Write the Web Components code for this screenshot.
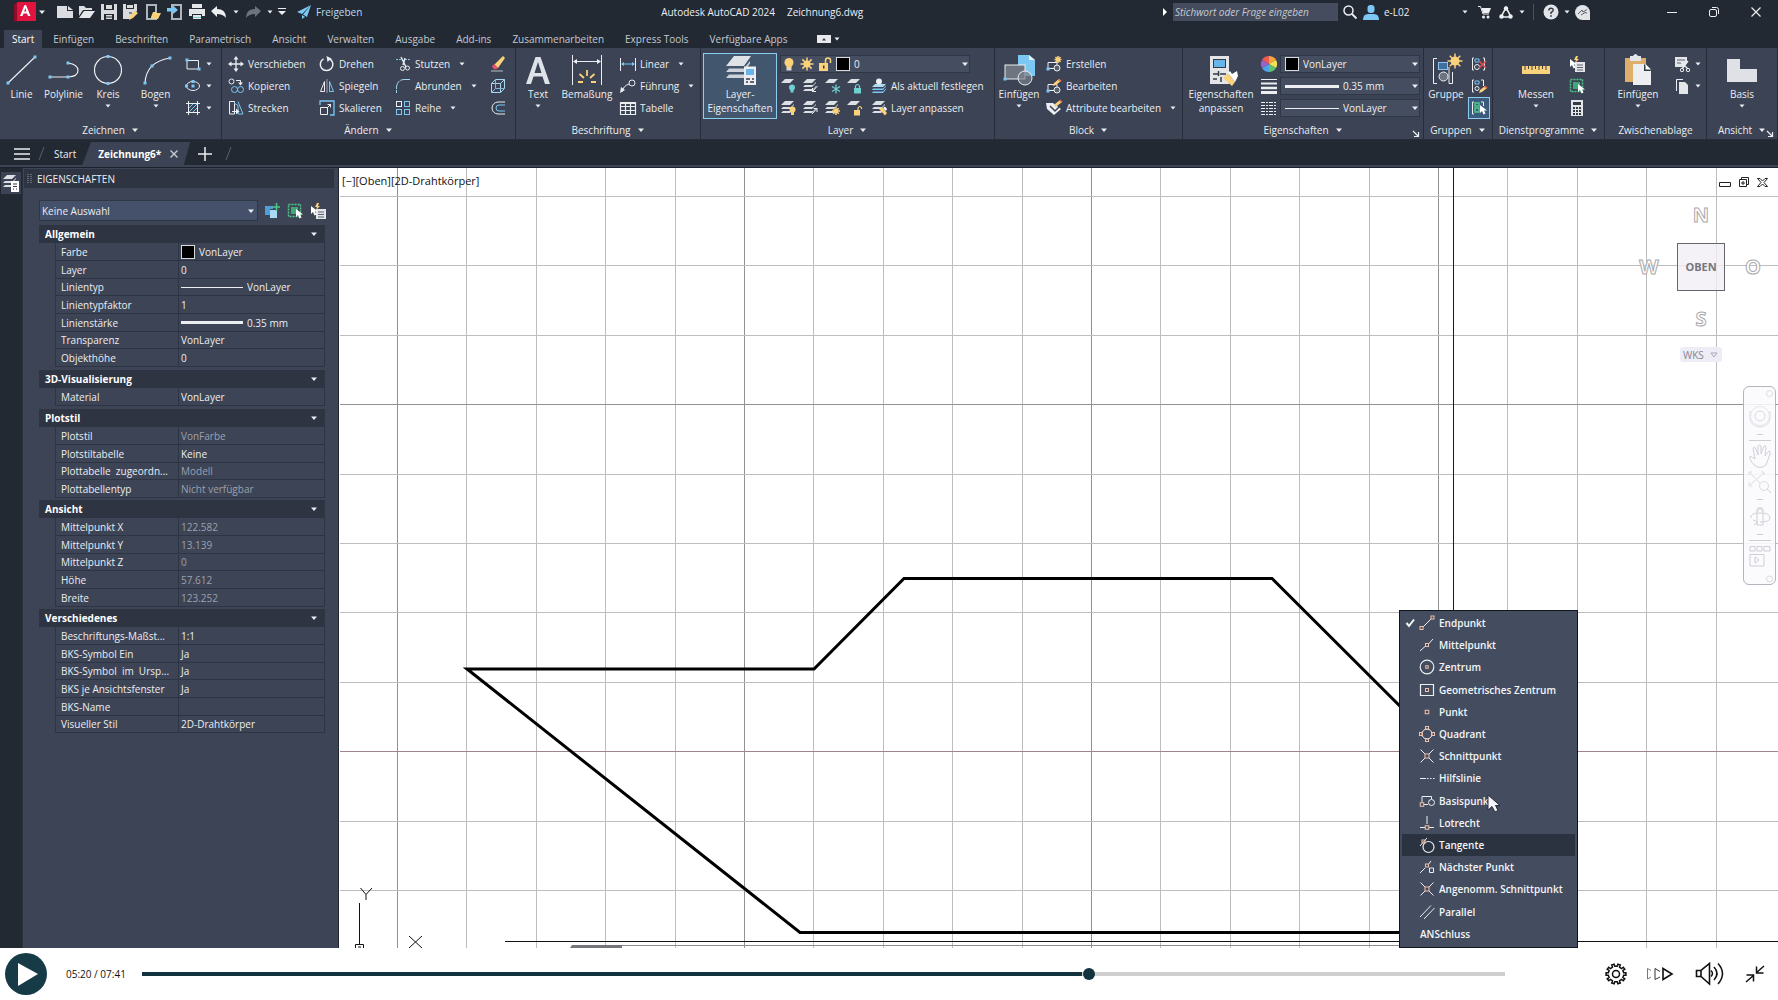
<!DOCTYPE html>
<html lang="de">
<head>
<meta charset="utf-8">
<title>Autodesk AutoCAD 2024 – Zeichnung6.dwg</title>
<style>
html,body{height:100%;margin:0}
body{background:#fff;font:10px/14px "Open Sans","Noto Sans","Liberation Sans",sans-serif;color:#eceef2;overflow:hidden}
cad-app{height:100%}
</style>
</head>
<body>
<cad-app></cad-app>
<script>
/* ---------- icons: name -> [width, height, svg content] ---------- */
const W='#eceef2', B='#7cc8f4', Y='#fbd27c', T='#6fd0d0';
const dot=(x,y)=>`<rect x="${x-1.5}" y="${y-1.5}" width="3" height="3" fill="${B}"/>`;
const sq=(x,y,s=3)=>`<rect x="${x-s/2}" y="${y-s/2}" width="${s}" height="${s}" fill="none" stroke="#f0c0a8"/>`;
const sheet=(y,f='#dcdfe4')=>`<path d="M1 ${y+4}L5 ${y}H14L10 ${y+4}Z" fill="${f}"/>`;
const sheets=sheet(1)+`<path d="M1 9L3 7H11L14 4V5L10 9ZM1 13L3 11H11L14 8V9L10 13Z" fill="#dcdfe4"/>`;
const st=(d,c=W,w=1)=>`<path d="${d}" fill="none" stroke="${c}" stroke-width="${w}"/>`;
const fl=(d,c=W)=>`<path d="${d}" fill="${c}"/>`;
const sun=(x,y,r,R,c=Y)=>{let s='';for(let i=0;i<8;i++){const a=i*Math.PI/4;s+=`M${x} ${y}L${(x+R*Math.cos(a)).toFixed(1)} ${(y+R*Math.sin(a)).toFixed(1)}`}return st(s,c,1.5)+`<circle cx="${x}" cy="${y}" r="${r}" fill="${c}"/>`};
const cursor=(x,y)=>`<path d="M${x} ${y}v8l2-2 1.500 3.500 2-1-1.500-3h3z" fill="#fff"/>`;
const pencil=(x,y)=>`<path d="M${x} ${y+6}l1-3 5-4 2 2-5 4z" fill="${Y}"/><path d="M${x+5} ${y}l1-1.500 2.500 2-1 1.500z" fill="#e8694c"/>`;
const ICONS={
 logo:[22,20,fl('M0 3L4 0H22V19H0Z','#e2143f')+fl('M0 3L3 1V20L0 19Z','#8d0d2b')+fl('M12 3L16.500 14H14L13 11.500H9.500L8.500 14H6L10.500 3ZM11.300 6L10.200 9.500H12.400Z','#fff')],
 down:[8,8,fl('M1 2.500H7L4 6Z')],
 downs:[6,6,fl('M.5 1.500H5.500L3 4.500Z')],
 right:[6,10,fl('M1 1L5 5L1 9Z','#fff')],
 new:[16,14,fl('M0 1H10V6H16V13H0Z','#dcdde0')+fl('M11 1L16 5H11Z','#dcdde0')],
 open:[16,14,fl('M0 1H5L7 3H13V5H4L0 11Z','#dcdde0')+fl('M5 6H16L11 13H0Z','#e6e7ea')],
 save:[16,16,fl('M0 0H16V16H0ZM3 0V6H13V0ZM3 10V16H13V10Z','#d9dade').replace('/>',' fill-rule="evenodd"/>')+fl('M5 1H11V5H5ZM5 11H11V12.500H5ZM5 13.500H11V15H5Z','#d9dade')],
 saveas:[16,16,fl('M0 0H14V7L7 15H0ZM3 0V5H11V0Z','#d9dade').replace('/>',' fill-rule="evenodd"/>')+fl('M4 1H10V4H4Z','#d9dade')+fl('M7 12l5-5 3 2-5 5-4 2z',Y)+st('M6 9H9','#222933')],
 openweb:[16,16,st('M2 1H11V15H2Z','#aeb4bc',2)+fl('M6 13L8 8H11L12 9H16L13 15H6Z',Y)],
 saveweb:[16,16,st('M5 1H14V15H5Z','#aeb4bc',2)+fl('M0 4H6V1.500L11 6L6 10V7.500H0Z',B)],
 print:[16,16,fl('M3 0H13V4H3ZM0 5H16V12H13V10H3V12H0Z','#e4e5e8')+fl('M4 11H12V15H4Z','#e4e5e8')+st('M4 13.500H12',T)],
 undo:[16,14,fl('M0 6L6 1V4Q15 4 15 13Q12 9 6 9V12Z','#eceef2')],
 redo:[16,14,fl('M16 6L10 1V4Q1 4 1 13Q4 9 10 9V12Z','#6d747e')],
 qat:[8,10,st('M0 1.500H8',W)+fl('M0 4H8L4 8Z')],
 plane:[14,14,fl('M0 7L14 0L5 9ZM14 0L10 12L6 9.500ZM5 10L8 12L5 14Z',B)],
 search:[14,14,`<circle cx="5.500" cy="5.500" r="4.500" fill="none" stroke="${W}" stroke-width="1.500"/>`+st('M9 9L13.500 13.500',W,1.800)],
 user:[16,15,`<rect x="4.500" y="0" width="7" height="8" rx="3" fill="${B}"/>`+fl('M0 15Q0 9 5 9H11Q16 9 16 15Z',B)],
 cart:[13,14,st('M0 1.500H2.500L5 9H11',W)+fl('M3.500 3H13L11 8H5Z')+'<circle cx="5.500" cy="12" r="1.500" fill="#eceef2"/><circle cx="10" cy="12" r="1.500" fill="#eceef2"/>'],
 adsk:[14,13,st('M7 1.500L2 11H12Z',W,1.600)+'<circle cx="7" cy="2.500" r="2.200" fill="#eceef2"/><circle cx="2.500" cy="10.500" r="2.200" fill="#eceef2"/><circle cx="11.500" cy="10.500" r="2.200" fill="#eceef2"/>'],
 help:[16,16,'<circle cx="8" cy="8" r="7.500" fill="#e3e4e8"/>'+st('M5.800 6.500Q5.800 4.300 8 4.300T10.200 6.300Q10.200 7.500 8 8.500V10','#333b47',1.400)+'<rect x="7.200" y="11.200" width="1.600" height="1.600" fill="#333b47"/>'],
 assist:[15,15,fl('M7.500 0A7.500 7.500 0 0 1 15 7.500V15H7.500A7.500 7.500 0 0 1 7.500 0Z','#e3e4e8')+st('M3 9L7 5L8 7L12 4.500M6 10L10 7.500L12 8','#59616d')],
 min:[10,10,st('M0 5.500H10',W)],
 restore:[10,10,`<rect x=".5" y="2.500" width="7" height="7" rx="1.500" fill="none" stroke="${W}"/>`+st('M3 .5H7.500Q9.500 .5 9.500 2.500V7',W)],
 close:[10,10,st('M.5 .5L9.500 9.500M9.500 .5L.5 9.500',W,1.200)],
 ribmin:[14,8,'<rect width="14" height="8" fill="#e8e9ec"/>'+fl('M5 5.500H9L7 3Z','#333b47')],
 line:[32,32,st('M2 29L29 3',W,1.200)+dot(2,29)+dot(29,3)],
 pline:[32,32,st('M2 23H20Q30 22.500 30 16.500T20 9',W,1.200)+dot(2,23)+dot(20,23)+dot(20,9)],
 circle:[32,32,`<circle cx="16" cy="16" r="13.500" fill="none" stroke="${W}" stroke-width="1.200"/>`+dot(16,2.500)+dot(16,29.500)],
 arc:[32,32,st('M5 29Q6 8 30 4',W,1.200)+dot(5,29)+dot(12,12)+dot(30,4)],
 rect:[16,16,st('M2 4.500H13.500V13H2Z')+dot(2,4)+dot(14,13)],
 ellipse:[16,16,`<ellipse cx="8" cy="8" rx="6.500" ry="4.500" fill="none" stroke="${W}"/>`+dot(8,8)+dot(8,3.500)+dot(1.500,8)],
 hatch:[16,16,st('M3.500 1V15M12.500 1V15M1 3.500H15M1 12.500H15')+st('M4 8L8 4M4 12L12 4M8 12L12 8',B)],
 move:[16,16,st('M8 2V14M2 8H14',W,1.300)+fl('M8 0L10.500 3.500H5.500ZM8 16L10.500 12.500H5.500ZM0 8L3.500 5.500V10.500ZM16 8L12.500 5.500V10.500Z')],
 copy:[16,16,`<circle cx="3.500" cy="3.500" r="2.500" fill="none" stroke="${W}"/>`+st('M8 2.500H12.500V5')+fl('M10 4.500H15L12.500 7.500Z')+`<circle cx="6.500" cy="11.500" r="3" fill="none" stroke="${B}"/><circle cx="12.500" cy="11.500" r="3" fill="none" stroke="${B}"/>`],
 stretch:[16,16,st('M1.500 1.500H6.500V14H1.500ZM4 11.500H10')+st('M6 3L10 5.500V14H15L10 1.500',B)+fl('M8 8.500L11.500 11.500L8 14.500Z')],
 rotate:[16,16,st('M11 3A6.300 6.300 0 1 1 4.500 2.800',W,1.500)+fl('M7.500 0L12.500 2.500L8.500 6Z')],
 mirror:[16,16,st('M5.500 3.500V13.500H1.500Z')+st('M8 1V15','#9aa3ae')+st('M10.500 3.500V13.500H14.500Z',B)],
 scale:[16,16,st('M1 5V1H15V15H11',B,1.300)+st('M1.500 7.500H8.500V14.500H1.500Z')+st('M8 8L11.500 4.500M8.500 4.500H11.500V7.500')],
 trim:[16,16,st('M1 3.500H6M10 3.500H16',B).replace('/>',' stroke-dasharray="2 1"/>')+st('M6 1L11 11M10 2L8 9',W,1.400)+`<circle cx="7.500" cy="12.500" r="2" fill="none" stroke="${W}"/><circle cx="12.500" cy="12" r="2" fill="none" stroke="${W}"/>`],
 fillet:[16,16,st('M1.500 15V9Q2 2 9 1.500H15','#9fd5f2').replace('/>',' stroke-dasharray="3 1 9 1 20"/>')],
 array:[16,16,`<g fill="none"><rect x="1.500" y="1.500" width="5" height="5" stroke="${W}"/><rect x="9.500" y="1.500" width="5" height="5" stroke="${B}"/><rect x="1.500" y="9.500" width="5" height="5" stroke="${B}"/><rect x="9.500" y="9.500" width="5" height="5" stroke="${B}"/></g>`],
 erase:[16,16,fl('M4 9L13 0L15 2L8 12Z',Y)+fl('M2 10L4.500 8L8 12L6 13.500Q3 13.500 2 10Z','#e8536d')+st('M1 15H13','#b9bfc8')],
 box3d:[16,16,st('M1.500 5.500L5.500 1.500H14.500V10.500L10.500 14.500H1.500Z M1.500 5.500H10.500V14.500M10.500 5.500L14.500 1.500','#a8d8f0')+st('M5.500 2V10.500H14M5.500 10.500L2 14','#7fb4d6')],
 offset:[16,16,st('M15 2H8A6 6 0 0 0 8 14H15')+st('M15 5H9A3 3 0 0 0 9 11H15',B)],
 text:[32,32,fl('M13.500 3H18.500L28 30H23L20.500 22.500H11.500L9 30H4ZM16 8L12.500 19H19.500Z','#dfe2e8')],
 dim:[32,32,st('M1.500 1V31M30.500 1V31',W)+st('M3 7.500H29')+fl('M2 7.500L6 5V10ZM30 7.500L26 5V10Z')+st('M7 28H12M20 28H25M8.500 20L13 24M23.500 20L19 24M16 16V22',Y,1.800)],
 linear:[16,16,st('M.5 2V15M15.500 2V15')+st('M2 8H14',B)+fl('M1 8L4 6V10ZM15 8L12 6V10Z',B)],
 leader:[16,16,st('M2 14Q3 8 9 6')+fl('M0 15L1 9L5 12Z')+`<circle cx="12" cy="5" r="3" fill="none" stroke="${W}"/>`],
 table:[16,16,st('M.5 2.500H15.500V14.500H.5ZM1 3.500H15M.5 6.500H15.500M.5 10.500H15.500M5.500 4V14.500M10.500 4V14.500',W,1.200)],
 layers:[32,32,fl('M2 12L10 2H27L20 12Z','#dfe2e6')+fl('M2 18L5 14.500H20L26 7V9.500L20 18ZM2 24L5 20.500H20V24Z','#cfd3d9')+fl('M20 12.500H32V31H20Z','#eceef2')+fl('M22 15H30V21H22Z','#68b5ec')+st('M22 25H26M28 25H30M22 28H24M26 28H30','#333b47',1.300)],
 bulb:[14,14,`<circle cx="7" cy="5.500" r="4.500" fill="${Y}"/>`+fl('M4.500 10.500H9.500V13.500H4.500Z','#d6d8dc')+fl('M4.500 8H9.500V11H4.500Z',Y)],
 sun:[14,14,sun(7,7,3.500,6.500)],
 unlock:[14,14,fl('M1 6H10V14H1Z',Y)+st('M7.500 6V3.500Q7.500 1 10 1T12.500 3.500V6',Y,1.500)+fl('M5 8.500H6.500V11.500H5Z','#333b47')],
 lay1:[16,16,sheet(1)+`<circle cx="12" cy="9.500" r="3" fill="${T}"/>`+fl('M10.500 12H13.500V14.500H10.500Z',T)],
 lay2:[16,16,sheets+st('M15.500 8L10.500 13.500M10.500 10V13.500H14')],
 lay3:[16,16,sheet(1)+st('M12 6.500V15.500M8 8.500L16 13.500M16 8.500L8 13.500',T,1.300)],
 lay4:[16,16,sheet(1)+fl('M8 10H15V15.500H8Z',T)+st('M9.500 10V8Q11.500 5 13.500 8V10',T,1.200)],
 lay5:[16,16,fl('M1 9L4 6H15L12 9Z','#b4d9f2')+fl('M1 12L2 10.500H12L15 7.500V8.500L12 12ZM1 15L2 13.500H12L15 10.500V11.500L12 15Z',B)+'<circle cx="8" cy="3.500" r="3" fill="#eceef2"/>'],
 lay6:[16,16,sheets+`<circle cx="12.500" cy="9.500" r="3" fill="${Y}"/>`+fl('M11 12H14V15H11Z',Y)],
 lay7:[16,16,sheets+st('M10 14L15 8.500M11.500 8.500H15V12')],
 lay8:[16,16,sheets+sun(12,11,2.200,4)],
 lay9:[16,16,sheet(1)+fl('M8 10H14V15.500H8Z',Y)+st('M12 10V8Q14 5 15.500 8V9',Y,1.200)],
 lay10:[16,16,sheets+fl('M8 9L11 7L16 13L14 15.500Z',Y)+fl('M12 8L14 6.500L16 9L15 11Z','#fff')],
 insblk:[32,32,fl('M15 1H26L32 6V22H15Z',B)+fl('M26 1V6H32Z','#e4f2fb')+'<rect x="2" y="11" width="20" height="14" fill="#6f7580" stroke="#eceef2"/>'+dot(2,25)+'<circle cx="22" cy="24" r="7" fill="#7a808b" fill-opacity=".7" stroke="#eceef2"/>'],
 mkblk:[16,16,st('M2 6.500H11V12.500H2Z')+dot(2,13)+'<circle cx="11" cy="12" r="3" fill="#59616f" stroke="#eceef2"/>'+sun(12,3.500,1.500,3.500)],
 edblk:[16,16,st('M2 6.500H11V12.500H2Z')+dot(2,13)+'<circle cx="11" cy="12" r="3" fill="#59616f" stroke="#eceef2"/>'+pencil(7,2)],
 attr:[16,16,fl('M0 3H7L15 9L8 15L1 9Z')+st('M4 6L9 11L13 7','#3b4354',1.500)+pencil(8,1)],
 match:[32,32,fl('M5 2H24V30H5Z','#e4e5e9')+fl('M8 5H21V14H8Z','#333b47')+fl('M9 6H20V13H9Z','#68b5ec')+st('M8 20H13M15 20H21M8 25H12M13.500 17V22M16 23V28','#333b47',1.500)+fl('M18 24L23 19L30 28L27 32Z',Y)+fl('M23 19L25 17L27 20L32 17L33 22L30 28Z','#fff')],
 wheel:[16,16,fl('M8 8L8 0A8 8 0 0 1 15 4Z','#f6a63a')+fl('M8 8L15 4A8 8 0 0 1 15 12Z','#f5e05a')+fl('M8 8L15 12A8 8 0 0 1 8 16Z','#5cc46c')+fl('M8 8L8 16A8 8 0 0 1 1 12Z','#4aa3e6')+fl('M8 8L1 12A8 8 0 0 1 1 4Z','#9a5fd0')+fl('M8 8L1 4A8 8 0 0 1 8 0Z','#ee5a52')],
 lws:[16,16,st('M0 1.500H16')+st('M0 5.500H16',W,2)+st('M0 10H16',W,2.500)+st('M0 14.500H16',W,3)],
 lts:[16,16,st('M0 2.500H16M0 5.500H16M0 8.500H16M0 11.500H16M0 14.500H16').replace('/>',' stroke-dasharray="4 1 2 1"/>')],
 group:[32,32,st('M7 4.500H3.500V29.500H7M19 13V29.500H22.500V18')+'<rect x="8.500" y="8.500" width="9" height="7" fill="#3f6f9e" stroke="#8fc4ec"/><circle cx="13.500" cy="22.500" r="4.500" fill="#6f7580" stroke="#eceef2"/>'+sun(25,7,4.500,7.500)],
 ungroup:[16,16,st('M3 2H1.500V14H3M12 2H13.500V14H12')+st('M4 3H8V6H4Z',B)+'<circle cx="6" cy="11" r="2.500" fill="none" stroke="#eceef2"/>'+st('M8 5L15 12M15 5L8 12','#e2484d',1.700)],
 grpedit:[16,16,st('M3 2H1.500V14H3M10 2H12.500V8')+st('M4 3H8V6H4Z',B)+'<circle cx="6" cy="10.500" r="2" fill="none" stroke="#eceef2"/>'+pencil(8,9)],
 grpsel:[16,16,st('M3 2H1.500V14H3M10 2H12.500V6')+st('M4 3H8V6H4ZM4 8H8V12H4Z','#4fc78b',1.500)+cursor(9,5)],
 measure:[32,32,fl('M2 12H30V20H2Z',Y)+st('M5 12V16M8.500 12V15M12 12V16M15.500 12V15M19 12V16M22.500 12V15M26 12V16','#4a4434')],
 qsel:[16,16,fl('M6 6H16V16H6Z','#e4e5e9')+st('M8 9H14M8 11.500H14M8 14H14','#59616f')+cursor(1,3)+fl('M7 0L5 4H7L6 7L10 3H8L9 0Z',Y)],
 selall:[16,16,'<rect x="1.500" y="1.500" width="12" height="12" fill="none" stroke="#4fc78b" stroke-width="1.500" stroke-dasharray="2 1"/>'+fl('M4 4H11V11H4Z','#3fa878')+cursor(9,6)],
 calc:[16,16,fl('M2 0H14V16H2Z','#e4e5e9')+fl('M4 2H12V5H4ZM4 7H6V9H4ZM7 7H9V9H7ZM10 7H12V9H10ZM4 10H6V12H4ZM7 10H9V12H7ZM10 10H12V12H10ZM4 13H6V15H4ZM7 13H9V15H7ZM10 13H12V15H10Z','#333b47')],
 paste:[32,32,fl('M3 4H24V28H3Z','#dfae6b')+fl('M8 2H11Q13.500 -2 16 2H19V7H8Z','#e4e5e9')+fl('M11 10H22L29 17V31H11Z','#eceef2')+fl('M22 10V17H29Z','#333b47')+fl('M23.500 10L29 15.500H23.500Z','#fff')],
 cut:[16,16,fl('M1 1H13V7L9 11H1Z','#e4e5e9')+st('M3 4H11M3 7H8','#59616f')+st('M14 5L8 13M7 6L14 13',W,1.300)+'<circle cx="8" cy="14" r="1.700" fill="none" stroke="#eceef2"/><circle cx="14" cy="14" r="1.700" fill="none" stroke="#eceef2"/>'],
 copyclip:[16,16,st('M2.500 13V1.500H9')+fl('M5 4H11L14 7V16H5Z','#e4e5e9')],
 basis:[32,32,fl('M1 5H14V15H31V28H1Z','#e0e1e6')],
 launch:[8,8,st('M1 1L6 6M6.500 2V6.500H2',W,1.200)],
 burger:[16,12,st('M0 1H16M0 6H16M0 11H16',W,1.600)],
 plus:[14,14,st('M7 0V14M0 7H14',W,1.500)],
 tabx:[8,8,st('M.5 .5L7.500 7.500M7.500 .5L.5 7.500','#c9cdd4',1.400)],
 palette:[18,18,sheets+fl('M9 7H17V18H9Z','#fff')+st('M11 10H15M11 15H12M14 15H15M11 12.500H15','#333b47')],
 grip:[6,10,st('M1 0V10M4 0V10','#9aa1ad').replace('/>',' stroke-dasharray="1 1"/>')],
 pick:[16,16,fl('M1 3H9V6H6V12H1Z','#4f9fd8')+fl('M6 7H13V15H6Z','#a8d8f5')+st('M12.500 0V8M8.500 4H16','#4fc78b',1.500)],
 check:[10,10,st('M1.500 5L4 8L9 1.500','#f4f5f8',2)],
 s_end:[16,16,st('M4 12L12 4')+sq(2.500,13)+sq(13.500,2.500)],
 s_mid:[16,16,st('M1 14L6 9.500M9.500 7L14 2')+sq(8,8)],
 s_cen:[16,16,`<circle cx="8" cy="8" r="6.800" fill="none" stroke="${W}" stroke-width="1.200"/>`+sq(8,8,2.500)],
 s_geo:[16,16,st('M1.500 2.500H14.500V13.500H1.500Z',W,1.200)+sq(8,8)],
 s_pt:[16,16,sq(8,8,3.500)],
 s_quad:[16,16,`<circle cx="8" cy="8" r="5" fill="none" stroke="${W}"/>`+sq(8,2)+sq(8,14)+sq(2,8)+sq(14,8)],
 s_int:[16,16,st('M1.500 1.500L6 6M10 10L14.500 14.500M14.500 1.500L10 6M6 10L1.500 14.500')+sq(8,8,4)],
 s_ext:[16,16,st('M1 8.500H7M8 8.500H9.500M11 8.500H12.500M14 8.500H15.500')],
 s_ins:[16,16,st('M3 9V3.500H12.500V6M5 11.500H9')+'<circle cx="12.500" cy="9.500" r="3" fill="none" stroke="#eceef2"/>'+sq(3,11.500,3.500)],
 s_perp:[16,16,st('M8 1V9M1 12.500H6M10 12.500H15')+sq(8,12.500,3.500)],
 s_tan:[16,16,'<circle cx="9.500" cy="10" r="5.500" fill="none" stroke="#eceef2" stroke-width="1.200"/>'+st('M1 9L8 1')+sq(4.500,4.500)],
 s_near:[16,16,st('M1 14L6 9M9 6L12 2')+sq(8,6.500)+st('M10.500 9H14.500V13.500H10.500Z')],
 s_par:[16,16,st('M1 13L12 1.500M5 15L15.500 4')],
 vmin:[12,10,st('M.5 4.500H11.500V8.500H.5Z','#222')],
 vmax:[12,12,st('M1.500 3.500H8.500V10.500H1.500ZM3.500 3V1.500H10.500V8.500H9M5 5V9M3 7H7','#222')],
 vclose:[11,11,st('M.5 1.500H3L5.500 4L8 1.500H10.500L7 5.500L10.500 9.500H8L5.500 7L3 9.500H.5L4 5.500Z','#222')],
 play:[42,42,'<circle cx="21" cy="21" r="21" fill="#163b47"/>'+fl('M13 10L33 21L13 33Z','#fff')],
 ffwd:[28,16,st('M1.500 13V2.500L5 4.500M1.500 13L5 11','#777')+st('M9 13.500V2.500L14 5.500M9 13.500L14 11','#333')+st('M17 13.500V2.500L26 8Z','#111',1.600)],
 vol:[32,24,st('M7 8.500H2.500V14.500H7L15.500 22V1.500L7 8.500V14.500','#111',1.600)+st('M17 8.500Q20 11.500 17 14.500M20 5Q26 11.500 20 18M24 1.500Q33 11.500 24 22','#111',1.500)],
 shrink:[20,20,st('M11 9L19 2M11.500 2.500V9H18.500M1 18L9 11M1.500 11H8.500V17.500','#111',1.500)],
 gear:[22,22,(()=>{let d='';for(let i=0;i<10;i++){const p=(r,o)=>{const a=(i+o)*Math.PI/5;return (11+r*Math.cos(a)).toFixed(1)+' '+(11+r*Math.sin(a)).toFixed(1)};d+=(i?'L':'M')+p(7.8,-.25)+'L'+p(10,-.2)+'L'+p(10,.2)+'L'+p(7.8,.25)}return st(d+'Z','#111',1.500)})()+'<circle cx="11" cy="11" r="3.500" fill="none" stroke="#111" stroke-width="1.500"/>'],
 pointer:[14,20,'<path d="M1 1V16L5 12.500L8 18L11 16.500L8.500 11.500H13Z" fill="#f4f4fa" stroke="#2a2d38"/>'],
 nav:[32,198,(()=>{const g='#dddbe3';return `<circle cx="25.500" cy="6.500" r="3" fill="none" stroke="${g}"/>`+`<circle cx="16" cy="29" r="5" fill="none" stroke="${g}"/><path d="M6 24V31A10 9 0 0 0 26 31V24" fill="none" stroke="${g}"/><circle cx="16" cy="29" r="9.500" fill="none" stroke="#e6e4ec"/>`+st('M13 47.500H19M5 53.500H27M13 112.500H19M13 147.500H19M5 153.500H27','#cfcdd6')+st('M10 78Q5 72 6 69L11 72L9 61Q11 59 12 62L14 68L14 59Q16 57 17 59L17 67L20 59Q22 58 22 61L21 69L25 64Q27 64 26 67L22 78Q16 83 10 78','#d2d0da')+st('M6 86L20 100M6 98L20 86M5 88V85H8M17 85H20V88M5 95V99H8',g)+`<circle cx="20" cy="99" r="4.500" fill="#fafafc" stroke="${g}"/>`+st('M23 102L27 106M13 125L16 121L19 125M13 122V138H19V122Q16 119 13 122M7 131Q6 126 16 126T26 131Q26 135 16 135M9 133L14 135L10 138','#d2d0da')+st('M6 159.500H11V164H6ZM13 159.500H18V164H13ZM20 159.500H26V164H20ZM6 167.500H20V179H6ZM11 170V176L15 173Z','#cfcdd6')+`<circle cx="25.500" cy="192" r="3" fill="none" stroke="${g}"/>`})()],
};
const svgFor=n=>{const[w,h,c]=ICONS[n];return `<svg width="${w}" height="${h}" viewBox="0 0 ${w} ${h}" aria-hidden="true">${c}</svg>`};

/* Base class: renders css + html into an open shadow root. */
class Base extends HTMLElement{
  constructor(){super();this.attachShadow({mode:'open'})}
  connectedCallback(){this.shadowRoot.innerHTML=`<style>*{box-sizing:border-box}button,select,input{font:inherit;color:inherit}button{background:none;border:0;padding:0;margin:0;cursor:default}svg{display:block;flex:none}${this.css()}</style>${this.html()}`}
  a(n,d=''){return this.getAttribute(n)??d}
}
customElements.define('cad-icon',class extends Base{
  css(){return ':host{display:inline-flex;flex:none}svg{overflow:visible}'}
  html(){return svgFor(this.a('name'))}
});
const ic=n=>`<cad-icon name="${n}"></cad-icon>`;
const btn=(n,label,cls='')=>`<button class="${cls}" aria-label="${label}">${ic(n)}</button>`;

customElements.define('title-bar',class extends Base{
  css(){return `:host{display:flex;align-items:center;height:24px;background:#222933;padding-right:1px}
   .g{display:flex;align-items:center}button{display:flex;justify-content:center;align-items:center;flex:none}
   .qat{padding-left:14px}.qat button{width:22px}.qat .logo{width:22px}.qat .n{width:12px}.qat .d{width:12px;margin-right:6px}
   a{display:flex;align-items:center;gap:5px;color:#b9dcf2;text-decoration:none;margin-left:9px}
   h1{flex:1;margin:0;font:inherit;white-space:nowrap;display:flex;gap:12px;justify-content:center}
   input{width:165px;height:18px;border:0;background:#444c5d;padding:0 2px;font-style:italic;margin:0 5px}input::placeholder{color:#c5c9d2;opacity:1}
   .r button{width:21px}.r .n{width:11px}.r .user{display:flex;gap:5px;margin-left:6px;width:105px;text-align:left}.user span{flex:1;white-space:nowrap}
   .sep{width:1px;height:16px;background:#4b525e;margin:0 6px}.r .cart{margin-left:6px}
   .win{margin-left:58px}.r .win button{width:42px}`}
  html(){return `<div class="g qat">${btn('logo','AutoCAD','logo')}${btn('down','Menü','d')}
   ${[['new','Neu'],['open','Öffnen'],['save','Speichern'],['saveas','Speichern unter'],['openweb','Aus Web öffnen'],['saveweb','In Web speichern'],['print','Plotten'],['undo','Rückgängig']].map(x=>btn(...x)).join('')}${btn('downs','Rückgängig-Liste','n')}${btn('redo','Wiederherstellen')}${btn('downs','Wiederherstellen-Liste','n')}${btn('qat','Schnellzugriff anpassen','n')}
   <a href="#">${ic('plane')}Freigeben</a></div>
   <h1><span>Autodesk AutoCAD 2024</span><span>Zeichnung6.dwg</span></h1>
   <div class="g r">${ic('right')}<input type="search" aria-label="Suche" placeholder="Stichwort oder Frage eingeben">${ic('search')}
   <button class="user">${ic('user')}<span>e-L02</span>${ic('downs')}</button>
   ${btn('cart','App Store','cart')}${btn('adsk','Autodesk')}${btn('downs','Mehr','n')}<i class="sep"></i>${btn('help','Hilfe')}${btn('downs','Hilfe-Menü','n')}${btn('assist','Assistent')}
   <div class="g win">${btn('min','Minimieren')}${btn('restore','Wiederherstellen')}${btn('close','Schließen')}</div></div>`}
});
customElements.define('ribbon-tabs',class extends Base{
  css(){return `:host{display:flex;gap:1px;background:#222933;height:24px;padding:6px 0 0 4px;align-items:stretch}
   button{padding:0 10px;color:#c6cad2;height:18px;line-height:17px;white-space:nowrap}.on{background:#3b4354;color:#fff;padding:0 8px}
   .m{display:flex;align-items:center;gap:3px;margin-left:8px}`}
  html(){return ['Start','Einfügen','Beschriften','Parametrisch','Ansicht','Verwalten','Ausgabe','Add-ins','Zusammenarbeiten','Express Tools','Verfügbare Apps'].map((t,i)=>`<button class="${i?'':'on'}">${t}</button>`).join('')+`<button class="m" aria-label="Ribbon minimieren">${ic('ribmin')}${ic('downs')}</button>`}
});
customElements.define('big-tool',class extends Base{
  css(){return `:host{display:block;flex:none;width:var(--w,44px)}button{width:100%;display:flex;flex-direction:column;align-items:center;height:66px;padding-top:1px;white-space:nowrap}
   .l{display:block;margin-top:1px;line-height:14px;text-align:center}:host([on]) button{background:#42566e;box-shadow:inset 0 0 0 1px #8ccdf3}
   .d{display:flex;margin-top:2px}`}
  html(){return `<button>${ic(this.a('icon'))}<span class="l"><slot></slot></span>${this.hasAttribute('menu')?`<span class="d">${ic('downs')}</span>`:''}</button>`}
});
customElements.define('small-tool',class extends Base{
  css(){return `:host{display:block;height:22px}button{display:flex;align-items:center;height:22px;white-space:nowrap;min-width:var(--w,0);justify-content:var(--j,flex-start)}
   .t{margin-left:4px}.d{margin-left:9px;display:flex}:host([bare]) .t{display:none}:host([bare]) .d{margin-left:5px}
   :host([on]) button{background:#3c5c7d;box-shadow:inset 0 0 0 1px #8ccdf3}`}
  html(){return `<button aria-label="${this.a('label',this.textContent)}">${ic(this.a('icon'))}<span class="t"><slot></slot></span>${this.hasAttribute('menu')?`<span class="d">${ic('downs')}</span>`:''}</button>`}
});
customElements.define('combo-box',class extends Base{
  css(){return `:host{display:flex;align-items:center;height:18px;background:#454e61;border:1px solid #2f3644;gap:4px;padding:0 0 0 4px}:host([tight]){padding-left:1px}
   select{appearance:none;background:none;border:0;padding:0;margin:0;flex:1;min-width:0;height:16px;line-height:14px}option{color:#000}`}
  html(){return `<slot></slot><select aria-label="${this.a('label')}"><option>${this.a('value')}</option></select>${ic('down')}`}
});
customElements.define('line-sample',class extends Base{
  css(){return `:host{display:block;flex:none;width:var(--w,62px);height:var(--h,1px);background:#eceef2}`}
  html(){return ''}
});
customElements.define('colour-swatch',class extends Base{
  css(){return `:host{display:block;flex:none;width:14px;height:14px;background:#000;border:1px solid #d8dade;box-sizing:border-box}`}
  html(){return ''}
});
customElements.define('ribbon-panel',class extends Base{
  css(){return `:host{display:flex;flex-direction:column;background:#3b4354;border-right:1px solid #262d38;min-width:0}
   .b{display:flex;height:73px;padding-top:5px;align-items:flex-start}
   .f{position:relative;display:flex;justify-content:center;align-items:center;gap:6px;height:18px;white-space:nowrap}
   .x{position:absolute;right:3px;top:6px}`}
  html(){return `<div class="b"><slot></slot></div><div class="f"><span>${this.a('caption')}</span>${this.hasAttribute('menu')?ic('down'):''}${this.hasAttribute('launcher')?`<span class="x">${ic('launch')}</span>`:''}</div>`}
});
const small=(i,t,m)=>`<small-tool icon="${i}" ${m?'menu':''}>${t}</small-tool>`;
const bare=(i,l,m,o='')=>`<small-tool bare icon="${i}" label="${l}" ${m?'menu':''} ${o}></small-tool>`;
const big=(i,t,w,m,o='')=>`<big-tool icon="${i}" style="--w:${w}px" ${m?'menu':''} ${o}>${t}</big-tool>`;
customElements.define('ribbon-bar',class extends Base{
  css(){return `:host{display:grid;grid-template-columns:222fr 294fr 185fr 294fr 188fr 241fr 69fr 112fr 102fr 71fr;background:#3b4354;border-bottom:1px solid #262d38}
   .s{display:flex;flex-direction:column;flex:none}.w76{width:76px}.w95{width:95px}.w97{width:97px}.p3{padding-left:3px}.p6{padding-left:6px}
   .row{display:flex}.row small-tool{--w:22px}.row small-tool:not([bare]){padding-left:3px}.ic small-tool{--w:22px;--j:center}
   .c{display:flex;align-items:center;height:22px;gap:3px}.c combo-box{flex:1}.grow{flex:1;min-width:0;padding:0 3px 0 2px}`}
  html(){return `
  <ribbon-panel caption="Zeichnen" menu>${big('line','Linie',43)}${big('pline','Polylinie',41)}${big('circle','Kreis',48,1)}${big('arc','Bogen',47,1)}<div class="s p6">${bare('rect','Rechteck',1)}${bare('ellipse','Ellipse',1)}${bare('hatch','Schraffur',1)}</div></ribbon-panel>
  <ribbon-panel caption="Ändern" menu><div class="s p6 w97">${small('move','Verschieben')}${small('copy','Kopieren')}${small('stretch','Strecken')}</div><div class="s w76">${small('rotate','Drehen')}${small('mirror','Spiegeln')}${small('scale','Skalieren')}</div><div class="s w95">${small('trim','Stutzen',1)}${small('fillet','Abrunden',1)}${small('array','Reihe',1)}</div><div class="s">${bare('erase','Löschen')}${bare('box3d','Auflösen')}${bare('offset','Versetzen')}</div></ribbon-panel>
  <ribbon-panel caption="Beschriftung" menu>${big('text','Text',44,1)}${big('dim','Bemaßung',54)}<div class="s p6">${small('linear','Linear',1)}${small('leader','Führung',1)}${small('table','Tabelle')}</div></ribbon-panel>
  <ribbon-panel caption="Layer" menu><span style="width:2px"></span>${big('layers','Layer-<br>Eigenschaften',74,0,'on')}<div class="s p3"><div class="c" style="width:190px"><combo-box tight label="Layer" value="0">${ic('bulb')}${ic('sun')}${ic('unlock')}<colour-swatch></colour-swatch></combo-box></div>
   <div class="row">${bare('lay1','Aus')}${bare('lay2','Isolieren')}${bare('lay3','Frieren')}${bare('lay4','Sperren')}${small('lay5','Als aktuell festlegen')}</div><div class="row">${bare('lay6','Ein')}${bare('lay7','Isolierung aufheben')}${bare('lay8','Tauen')}${bare('lay9','Entsperren')}${small('lay10','Layer anpassen')}</div></div></ribbon-panel>
  <ribbon-panel caption="Block" menu>${big('insblk','Einfügen',48,1)}<div class="s p3">${small('mkblk','Erstellen')}${small('edblk','Bearbeiten')}${small('attr','Attribute bearbeiten',1)}</div></ribbon-panel>
  <ribbon-panel caption="Eigenschaften" menu launcher>${big('match','Eigenschaften<br>anpassen',76)}<div class="s grow"><div class="c">${ic('wheel')}<combo-box label="Farbe" value="VonLayer"><colour-swatch></colour-swatch></combo-box></div><div class="c">${ic('lws')}<combo-box label="Linienstärke" value="0.35 mm"><line-sample style="--w:54px;--h:3px"></line-sample></combo-box></div><div class="c">${ic('lts')}<combo-box label="Linientyp" value="VonLayer"><line-sample style="--w:54px"></line-sample></combo-box></div></div></ribbon-panel>
  <ribbon-panel caption="Gruppen" menu>${big('group','Gruppe',44)}<div class="s ic">${bare('ungroup','Gruppierung aufheben')}${bare('grpedit','Gruppe bearbeiten')}${bare('grpsel','Gruppenauswahl',0,'on')}</div></ribbon-panel>
  <ribbon-panel caption="Dienstprogramme" menu>${big('measure','Messen',86,1)}<div class="s" style="margin-left:-10px">${bare('qsel','Schnellauswahl')}${bare('selall','Alles auswählen')}${bare('calc','Taschenrechner')}</div></ribbon-panel>
  <ribbon-panel caption="Zwischenablage">${big('paste','Einfügen',66,1)}<div class="s p3">${bare('cut','Ausschneiden',1)}${bare('copyclip','Kopieren',1)}</div></ribbon-panel>
  <ribbon-panel caption="Ansicht" menu launcher>${big('basis','Basis',70,1)}</ribbon-panel>`}
});
customElements.define('doc-tabs',class extends Base{
  css(){return `:host{display:flex;align-items:flex-end;height:25px;background:#222933}
   button{display:flex;align-items:center;height:23px}.m{padding:0 8px 0 14px}
   .sl{width:8px;height:23px}.st{padding:0 6px 0 8px}
   .on{background:#3b4354;clip-path:polygon(8% 0,100% 0,94% 100%,0 100%);width:108px;padding-left:16px;gap:9px;font-weight:700;color:#fff}.pl{padding:0 13px 0 8px}`}
  html(){const s='<svg class="sl" width="8" height="23"><path d="M1 18L6 5" stroke="#59606c"/></svg>';return `<button class="m" aria-label="Menü">${ic('burger')}</button>${s}<button class="st">Start</button><button class="on">Zeichnung6*${ic('tabx')}</button><button class="pl" aria-label="Neue Zeichnung">${ic('plus')}</button>${s}`}
});
customElements.define('prop-section',class extends Base{
  css(){return `:host{display:block;margin-bottom:3px}:host(:nth-child(n+3)){margin-bottom:2px}h3{margin:0;display:flex;justify-content:space-between;align-items:center;height:18px;background:#2f3443;padding:0 7px 0 6px;font:700 10px/16px "Open Sans","Noto Sans",sans-serif;color:#fff}
   table{border-collapse:separate;border-spacing:0;width:calc(100% - 16px);margin-left:16px;table-layout:fixed;border-left:1px solid #2d3443}
   th,td{padding:0 0 0 3px;height:18px;font-weight:400;text-align:left;border-right:1px solid #2d3443;border-bottom:1px solid #2d3443;line-height:16px;overflow:hidden;white-space:pre}th{width:123px;padding-left:5px}td{padding-left:2px}
   tr:nth-child(3n) :is(th,td){height:17px}.v{display:flex;align-items:center;gap:4px;height:16px}.dim{color:#9ba1ad}`}
  html(){return `<h3>${this.a('caption')}${ic('down')}</h3><table>${this.rows.map(([k,v,d,pre])=>`<tr><th scope="row">${k}</th><td><span class="v ${d?'dim':''}">${pre||''}${v}</span></td></tr>`).join('')}</table>`}
});
customElements.define('properties-palette',class extends Base{
  css(){return `:host{display:flex;background:#3d4455;border-right:1px solid #20252f}
   .strip{width:23px;background:#222932;padding:4px 0 0 1px;flex:none;border-right:1px solid #2b323e}.strip button{width:20px;height:22px;background:#3b4354;display:flex;align-items:center;justify-content:center}
   .m{flex:1;min-width:0}.h{display:flex;align-items:center;gap:4px;height:19px;margin:1px 4px 0 1px;background:#2f3443;padding-left:3px}h2{font:inherit;margin:0}
   .sel{display:flex;align-items:center;margin:12px 11px 4px 16px;gap:6px}.sel combo-box{flex:1;height:21px;padding:0 2px;background:#45506a}.sel button{width:17px;display:flex}
   .secs{margin:0 13px 0 16px}`}
  html(){return `<div class="strip"><button aria-label="Eigenschaften">${ic('palette')}</button></div><div class="m"><div class="h">${ic('grip')}<h2>EIGENSCHAFTEN</h2></div>
   <div class="sel"><combo-box label="Auswahl" value="Keine Auswahl"></combo-box>${btn('pick','Wert umschalten')}${btn('selall','Objekte wählen')}${btn('qsel','Schnellauswahl')}</div><div class="secs"></div></div>`}
  connectedCallback(){super.connectedCallback();
   const L=h=>`<line-sample style="--h:${h}px"></line-sample>`;
   const S=[['Allgemein',[['Farbe','VonLayer',0,'<colour-swatch></colour-swatch>'],['Layer','0'],['Linientyp','VonLayer',0,L(1)],['Linientypfaktor','1'],['Linienstärke','0.35 mm',0,L(3)],['Transparenz','VonLayer'],['Objekthöhe','0']]],
   ['3D-Visualisierung',[['Material','VonLayer']]],
   ['Plotstil',[['Plotstil','VonFarbe',1],['Plotstiltabelle','Keine'],['Plottabelle  zugeordn...','Modell',1],['Plottabellentyp','Nicht verfügbar',1]]],
   ['Ansicht',[['Mittelpunkt X','122.582',1],['Mittelpunkt Y','13.139',1],['Mittelpunkt Z','0',1],['Höhe','57.612',1],['Breite','123.252',1]]],
   ['Verschiedenes',[['Beschriftungs-Maßst...','1:1'],['BKS-Symbol Ein','Ja'],['BKS-Symbol  im  Ursp...','Ja'],['BKS je Ansichtsfenster','Ja'],['BKS-Name',''],['Visueller Stil','2D-Drahtkörper']]]];
   for(const[c,r]of S){const e=document.createElement('prop-section');e.setAttribute('caption',c);e.rows=r;this.shadowRoot.querySelector('.secs').append(e)}}
});
customElements.define('snap-menu',class extends Base{
  css(){return `:host{display:block;width:179px;background:#444d60;border:1px solid #10141b;padding:1px 2px 2px;color:#f4f5f8}
   button{display:flex;align-items:center;width:100%;height:22px;padding-left:3px;gap:4px;white-space:nowrap;font-weight:600}button:nth-child(5n){height:23px}
   .k{width:10px;display:flex}.on{background:#2b3340}.last{padding-left:18px}`}
  html(){return [['s_end','Endpunkt'],['s_mid','Mittelpunkt'],['s_cen','Zentrum'],['s_geo','Geometrisches Zentrum'],['s_pt','Punkt'],['s_quad','Quadrant'],['s_int','Schnittpunkt'],['s_ext','Hilfslinie'],['s_ins','Basispunkt'],['s_perp','Lotrecht'],['s_tan','Tangente'],['s_near','Nächster Punkt'],['s_int','Angenomm. Schnittpunkt'],['s_par','Parallel']].map(([i,t],n)=>`<button class="${n==10?'on':''}"><span class="k">${n?'':ic('check')}</span>${ic(i)}<span>${t}</span></button>`).join('')+'<button class="last">ANSchluss</button>'}
});
customElements.define('view-compass',class extends Base{
  css(){return `:host{display:flex;flex-direction:column;align-items:center}.g{display:grid;grid-template-columns:repeat(3,52px);grid-auto-rows:52px;place-items:center}
   .l{font:700 20px/24px "Open Sans",sans-serif;color:#fff;-webkit-text-stroke:1px #a9a9ae}
   .cube{width:48px;height:48px;background:#f1eff4cc;border:1px solid #66666c;color:#77777f;font:700 11px/16px "Open Sans",sans-serif}
   .wks{display:flex;align-items:center;gap:6px;width:42px;height:15px;margin-top:2px;background:#eeecf4;color:#85848f;padding-left:3px;border-radius:3px}`}
  html(){return `<div class="g"><i></i><span class="l">N</span><i></i><span class="l">W</span><button class="cube">OBEN</button><span class="l">O</span><i></i><span class="l">S</span><i></i></div><button class="wks">WKS<svg width="8" height="8"><path d="M1 2H7L4 6Z" fill="none" stroke="#a8a6b2"/></svg></button>`}
});
customElements.define('drawing-view',class extends Base{
  css(){return `:host{display:block;position:relative;overflow:hidden;background:#fff;color:#111}
   .cv{position:absolute;inset:0;width:100%;height:100%}
   .lab{position:absolute;left:3px;top:6px;display:flex}
   .lab button{color:#111;font-size:11px}.vc{position:absolute;right:10px;top:8px;display:flex;gap:7px}
   view-compass{position:absolute;right:-1px;top:21px}.nav{position:absolute;right:2px;top:218px;width:33px;height:199px;border:1px solid #b5b3bd;border-radius:6px;background:#faf9fce0}
   snap-menu{position:absolute;left:1060px;top:442px}.ptr{position:absolute;left:1148px;top:626px}`}
  html(){let g='';const line=(d,c,w=1)=>`<path d="${d}" stroke="${c}" stroke-width="${w}" fill="none"/>`;
   for(let i=0;i<40;i++){const x=58+Math.round(69.4*i)+.5;g+=line(`M${x} 0V3000`,i%5==0?'#929292':'#bdbdbd')}
   for(let j=0;j<30;j++){const y=28+Math.round(69.4*j)+.5;g+=line(`M1 ${y}H4000`,j==8?'#a08588':j%5==3?'#929292':'#bdbdbd')}
   return `<svg class="cv">${g}${line('M1114.500 0V780','#1a1a1a')}${line('M166 773.500H4000','#111')}
   ${line('M128 501H475L565 410.500H933L1124 601V764.500H461Z','#000',3)}
   <path d="M233 777H283V780H231Z" fill="#75757b"/>${line('M283 777.500H1060','#8c8c92')}
   ${line('M20.500 735V776M16.500 780V776.500H24.500V780M22 779H19','#111')}${line('M21.500 720L27 726.500L33 720M27 726.500V732M70 768L83 780M83 768L70 780','#111')}</svg>
   <div class="lab"><button>[−]</button><button>[Oben]</button><button>[2D-Drahtkörper]</button></div>
   <div class="vc">${btn('vmin','Minimieren')}${btn('vmax','Maximieren')}${btn('vclose','Schließen')}</div>
   <view-compass></view-compass><div class="nav">${ic('nav')}</div><snap-menu></snap-menu><span class="ptr">${ic('pointer')}</span>`}
});
customElements.define('video-player',class extends Base{
  css(){return `:host{display:flex;align-items:center;height:52px;background:#fff;color:#111;padding:0 13px 0 5px}
   button{flex:none;display:flex;justify-content:center}time{margin:0 20px 0 19px;flex:none;white-space:nowrap;width:56px}
   input{appearance:none;flex:1;min-width:0;height:16px;margin:0;background:none}
   input::-webkit-slider-runnable-track{height:4px;background:linear-gradient(90deg,#12323d 69%,#cfcfcf 69%)}
   input::-webkit-slider-thumb{appearance:none;width:12px;height:12px;border-radius:50%;background:#12323d;margin-top:-4px}
   .c{display:flex;align-items:center;justify-content:space-between;width:160px;margin-left:100px}`}
  html(){return `${btn('play','Abspielen')}<time>05:20 / 07:41</time><input type="range" aria-label="Position" min="0" max="461" value="321"><div class="c">${btn('gear','Einstellungen')}${btn('ffwd','Geschwindigkeit')}${btn('vol','Lautstärke')}${btn('shrink','Vollbild beenden')}</div>`}
});
customElements.define('cad-app',class extends Base{
  css(){return `:host{display:flex;flex-direction:column}title-bar,ribbon-tabs,ribbon-bar,doc-tabs,video-player{flex:none}
   .bar{height:3px;background:#3b4354;border-bottom:1px solid #1c222b;flex:none}main{display:flex;flex:1;min-height:0}properties-palette{width:339px;flex:none}drawing-view{flex:1;min-width:0}`}
  html(){return `<title-bar></title-bar><ribbon-tabs></ribbon-tabs><ribbon-bar></ribbon-bar><doc-tabs></doc-tabs><div class="bar"></div><main><properties-palette></properties-palette><drawing-view></drawing-view></main><video-player></video-player>`}
});
</script>
</body>
</html>
